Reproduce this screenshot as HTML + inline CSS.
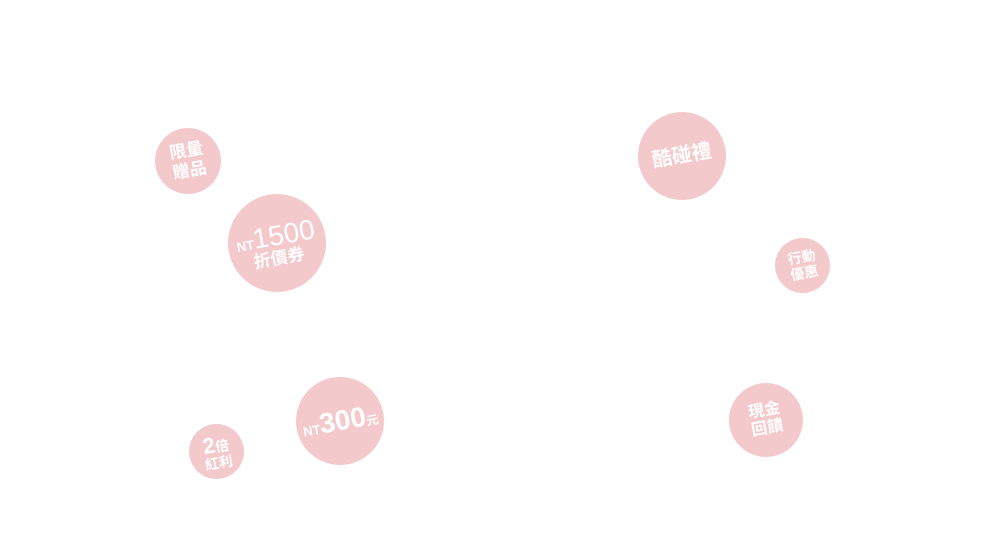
<!DOCTYPE html>
<html><head><meta charset="utf-8"><style>
html,body{margin:0;padding:0;background:#fff;width:1000px;height:549px;overflow:hidden;position:relative}
.c{position:absolute;border-radius:50%;background:#f4c9cc;display:flex;align-items:center;justify-content:center;color:#fff;font-family:"Liberation Sans","Noto Sans CJK TC",sans-serif;font-weight:bold;text-align:center}
.t{transform:rotate(-10deg);line-height:1.15}
</style></head><body>
<div class="c" style="left:155px;top:128px;width:66px;height:66px"><div class="t" style="font-size:17px">限量<br>贈品</div></div>
<div class="c" style="left:228px;top:194px;width:98px;height:98px"><div class="t" style="line-height:1;margin-top:4px"><span style="font-size:13px">NT</span><span style="font-size:28px;font-weight:normal">1500</span><br><span style="font-size:17px">折價券</span></div></div>
<div class="c" style="left:638px;top:112px;width:88px;height:88px"><div class="t" style="font-size:20px">酷碰禮</div></div>
<div class="c" style="left:775px;top:238px;width:55px;height:55px"><div class="t" style="font-size:14px">行動<br>優惠</div></div>
<div class="c" style="left:729px;top:383px;width:74px;height:74px"><div class="t" style="font-size:16px">現金<br>回饋</div></div>
<div class="c" style="left:189px;top:424px;width:55px;height:55px"><div class="t" style="font-size:14px;line-height:1"><span style="font-size:22px">2</span>倍<br>紅利</div></div>
<div class="c" style="left:296px;top:377px;width:88px;height:88px"><div class="t" style="white-space:nowrap"><span style="font-size:13px">NT</span><span style="font-size:28px">300</span><span style="font-size:12px">元</span></div></div>
</body></html>
